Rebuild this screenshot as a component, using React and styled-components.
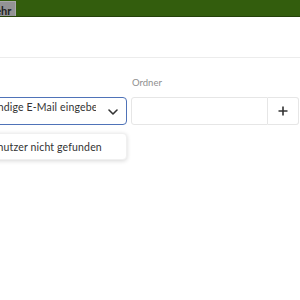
import React from 'react';
import styled, { createGlobalStyle } from 'styled-components';

const Global = createGlobalStyle`
  html, body { margin: 0; padding: 0; background: #fff; }
  body { font-family: Lato, "Noto Sans", sans-serif; overflow: hidden; }
`;

const Page = styled.div`
  width: 300px;
  height: 300px;
  overflow: hidden;
  background: #fff;
`;

const TopBar = styled.div`
  height: 16px;
  background: #335d0d;
  border-bottom: 1px solid #24420a;
  display: flex;
  align-items: flex-end;
`;

const Tab = styled.div`
  margin-left: -20px;
  height: 15px;
  padding: 0 4px;
  background: #939395;
  border: 1px solid #a8a8aa;
  border-bottom: none;
  color: #222;
  font-size: 11px;
  font-weight: 700;
  line-height: 17px;
  box-sizing: border-box;
`;

const Toolbar = styled.div`
  height: 40px;
  border-bottom: 1px solid #ececec;
`;

const Form = styled.div`
  margin-left: -43px;
  padding-top: 19px;
  display: grid;
  grid-template-columns: 170px 137px 27px 20px;
  column-gap: 4px;
  row-gap: 9px;
  align-items: end;
`;

const Label = styled.div`
  font-size: 9.5px;
  color: #8f8f8f;
  padding-left: 1px;
`;

const Select = styled.div`
  height: 28px;
  box-sizing: border-box;
  border: 1px solid #4f73b8;
  border-radius: 4px;
  display: flex;
  align-items: flex-start;
  padding: 3px 8px 0 8px;
  position: relative;
  font-size: 10.5px;
  color: #333;
  overflow: hidden;
  white-space: nowrap;
`;

const SelectText = styled.span`
  width: 130px;
  overflow: hidden;
  letter-spacing: 0.15px;
`;

const Chevron = styled.svg`
  position: absolute;
  right: 8px;
  top: 11px;
`;

const Input = styled.div`
  height: 28px;
  box-sizing: border-box;
  border: 1px solid #e6e6e6;
  border-radius: 3px 0 0 3px;
`;

const AddButton = styled.div`
  margin-left: -4px;
  height: 28px;
  box-sizing: border-box;
  border: 1px solid #e6e6e6;
  border-left: none;
  border-radius: 0 3px 3px 0;
  display: flex;
  align-items: center;
  justify-content: center;
  color: #333;
`;

const Extra = styled.div`
  height: 28px;
  box-sizing: border-box;
  border: 1px solid #e6e6e6;
  border-radius: 3px;
  margin-left: -2px;
`;

const Menu = styled.div`
  grid-column: 1;
  margin-top: -1px;
  height: 27px;
  box-sizing: border-box;
  border-radius: 4px;
  background: #fff;
  box-shadow: 0 1px 4px rgba(0, 0, 0, 0.16);
  border: 1px solid #f0f0f0;
  display: flex;
  align-items: center;
  padding-left: 27px;
  font-size: 10.5px;
  color: #333;
  white-space: nowrap;
  letter-spacing: 0.15px;
`;

export default function App() {
  return (
    <Page>
      <Global />
      <TopBar>
        <Tab>Mehr</Tab>
      </TopBar>
      <Toolbar />
      <Form>
        <Label>E-Mail</Label>
        <Label>Ordner</Label>
        <div />
        <div />
        <Select>
          <SelectText>Vollständige E-Mail eingeben</SelectText>
          <Chevron width="10" height="6" viewBox="0 0 10 6">
            <path d="M1 1l4 4 4-4" fill="none" stroke="#333" strokeWidth="1.6" strokeLinecap="round" strokeLinejoin="round" />
          </Chevron>
        </Select>
        <Input />
        <AddButton>
          <svg width="10" height="10" viewBox="0 0 10 10">
            <path d="M5 0.5v9M0.5 5h9" stroke="#333" strokeWidth="1.6" />
          </svg>
        </AddButton>
        <Extra />
        <Menu>Benutzer nicht gefunden</Menu>
      </Form>
    </Page>
  );
}
